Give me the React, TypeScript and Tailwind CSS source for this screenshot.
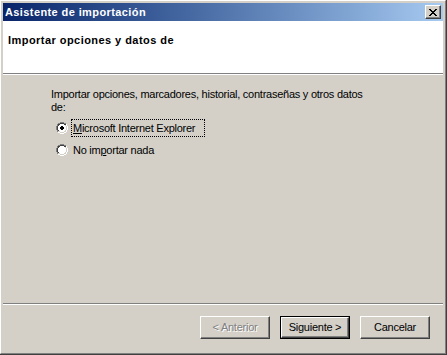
const X_PIXELS = [
  "XX....XX",
  ".XX..XX.",
  "..XXXX..",
  "...XX...",
  "..XXXX..",
  ".XX..XX.",
  "XX....XX",
];

const RADIO_PIXELS = [
  "....GGGG....",
  "..GGDDDDGG..",
  ".GDDwwwwDDW.",
  ".GDwwwwwwLW.",
  "GDwwwwwwwwLW",
  "GDwwwwwwwwLW",
  "GDwwwwwwwwLW",
  "GDwwwwwwwwLW",
  ".GDwwwwwwLW.",
  ".GLLwwwwLLW.",
  "..WWLLLLWW..",
  "....WWWW....",
];

const DOT_PIXELS = [
  "............",
  "............",
  "............",
  "............",
  ".....XX.....",
  "....XXXX....",
  "....XXXX....",
  ".....XX.....",
];

const COLORS: Record<string, string> = {
  G: "#808080",
  D: "#404040",
  L: "#d4d0c8",
  W: "#ffffff",
  w: "#ffffff",
  X: "#000000",
};

function PixelMap({ rows }: { rows: string[] }) {
  return (
    <>
      {rows.map((row, y) =>
        row.split("").map((c, x) =>
          COLORS[c] ? <rect key={`${x}-${y}`} x={x} y={y} width="1" height="1" fill={COLORS[c]} /> : null
        )
      )}
    </>
  );
}

function CloseGlyph() {
  return (
    <svg width="8" height="7" viewBox="0 0 8 7" shapeRendering="crispEdges">
      <PixelMap rows={X_PIXELS} />
    </svg>
  );
}

function Radio({ checked }: { checked?: boolean }) {
  return (
    <svg width="12" height="12" viewBox="0 0 12 12" shapeRendering="crispEdges" className="shrink-0">
      <PixelMap rows={RADIO_PIXELS} />
      {checked && <PixelMap rows={DOT_PIXELS} />}
    </svg>
  );
}

function Button({
  children,
  disabled,
  isDefault,
}: {
  children: React.ReactNode;
  disabled?: boolean;
  isDefault?: boolean;
}) {
  const inner = (
    <div
      className={
        "flex h-full w-full items-center justify-center border border-t-white border-l-white border-r-[#404040] border-b-[#404040] bg-[#d4d0c8] shadow-[inset_-1px_-1px_#808080,inset_1px_1px_#d4d0c8] " +
        (disabled ? "text-[#808080] [text-shadow:1px_1px_0_#ffffff]" : "text-black")
      }
    >
      {children}
    </div>
  );
  if (isDefault) {
    return <div className="h-[23px] w-[70px] border border-black">{inner}</div>;
  }
  return <div className="h-[23px] w-[70px]">{inner}</div>;
}

export default function App() {
  return (
    <div className="h-[355px] w-[447px] border-r border-b border-r-[#404040] border-b-[#404040] bg-[#d4d0c8] font-['Liberation_Sans',Arial,sans-serif] text-[11px] leading-[13px] tracking-[-0.25px] text-black">
      <div className="flex h-full flex-col border border-t-white border-l-white border-r-[#808080] border-b-[#808080] p-[2px]">
        {/* title bar */}
        <div className="flex h-[18px] shrink-0 items-center justify-between bg-linear-to-r from-[#0a246a] to-[#a6caf0] pr-[2px] pl-[2px]">
          <span className="font-bold tracking-[0.4px] text-white">Asistente de importación</span>
          <div className="flex h-[14px] w-[16px] items-center justify-center border border-t-white border-l-white border-r-[#404040] border-b-[#404040] bg-[#d4d0c8] shadow-[inset_-1px_-1px_#808080,inset_1px_1px_#d4d0c8]">
            <CloseGlyph />
          </div>
        </div>

        {/* header */}
        <div className="h-[52px] shrink-0 bg-white pt-[13px] pl-[5px]">
          <p className="font-bold tracking-[0.45px]">Importar opciones y datos de</p>
        </div>
        <div className="h-px shrink-0 bg-[#808080]" />
        <div className="h-px shrink-0 bg-white" />

        {/* body */}
        <div className="flex-1 pt-[13px] pl-[48px]">
          <p>
            Importar opciones, marcadores, historial, contraseñas y otros datos
            <br />
            de:
          </p>
          <div className="mt-[3px] flex flex-col">
            <div className="flex h-[22px] items-center">
              <div className="ml-[5px]">
                <Radio checked />
              </div>
              <span className="ml-[3px] flex h-[18px] w-[134px] items-center border border-dotted border-black px-[1px]">
                <span>
                  <span className="underline">M</span>icrosoft Internet Explorer
                </span>
              </span>
            </div>
            <div className="flex h-[22px] items-center">
              <div className="ml-[5px]">
                <Radio />
              </div>
              <span className="ml-[5px]">
                No im<span className="underline">p</span>ortar nada
              </span>
            </div>
          </div>
        </div>

        {/* footer */}
        <div className="h-px shrink-0 bg-[#808080]" />
        <div className="h-px shrink-0 bg-white" />
        <div className="flex h-[46px] shrink-0 justify-end gap-[10px] pt-[11px] pr-[13px]">
          <Button disabled>&lt; Anterior</Button>
          <Button isDefault>Siguiente &gt;</Button>
          <Button>Cancelar</Button>
        </div>
      </div>
    </div>
  );
}
